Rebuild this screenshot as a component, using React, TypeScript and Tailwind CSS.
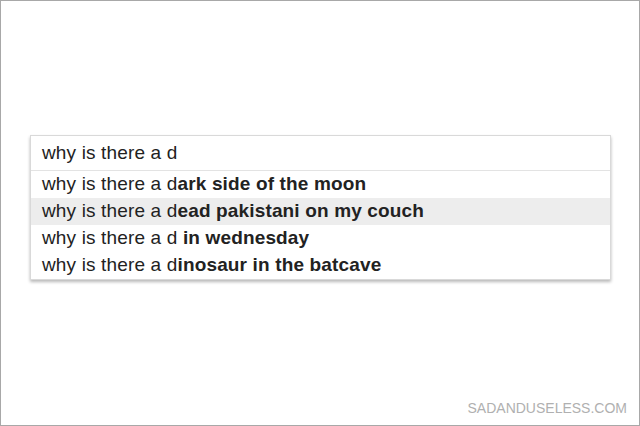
import React from 'react';

const suggestions = [
  { typed: 'why is there a d', rest: 'ark side of the moon' },
  { typed: 'why is there a d', rest: 'ead pakistani on my couch', active: true },
  { typed: 'why is there a d', rest: ' in wednesday' },
  { typed: 'why is there a d', rest: 'inosaur in the batcave' },
];

export default function App() {
  return (
    <div
      className="w-[640px] h-[426px] bg-white border border-[#a8a8a8] flex flex-col"
      style={{ fontFamily: '"Liberation Sans", Arial, sans-serif' }}
    >
      <div className="pt-[134px] pl-[29px] pr-[28px]">
        {/* search box */}
        <div className="w-[581px] border border-[#d9d9d9] bg-white shadow-[0_2px_3px_rgba(0,0,0,0.28)]">
          <div className="h-[35px] flex items-center pl-[11px] text-[19px] tracking-[0.15px] text-[#222] border-b border-[#e3e3e3]">
            why is there a d
          </div>
          {suggestions.map((s, i) => (
            <div
              key={i}
              className={`h-[27px] flex items-center pl-[11px] text-[19px] tracking-[0.15px] text-[#222] whitespace-pre ${
                s.active ? 'bg-[#ededed]' : ''
              }`}
            >
              <span>{s.typed}</span>
              <span className="font-bold">{s.rest}</span>
            </div>
          ))}
        </div>
      </div>
      <div className="mt-auto mb-[6px] mr-[12px] text-right text-[14px] text-[#b0b0b0]">
        SADANDUSELESS.COM
      </div>
    </div>
  );
}
